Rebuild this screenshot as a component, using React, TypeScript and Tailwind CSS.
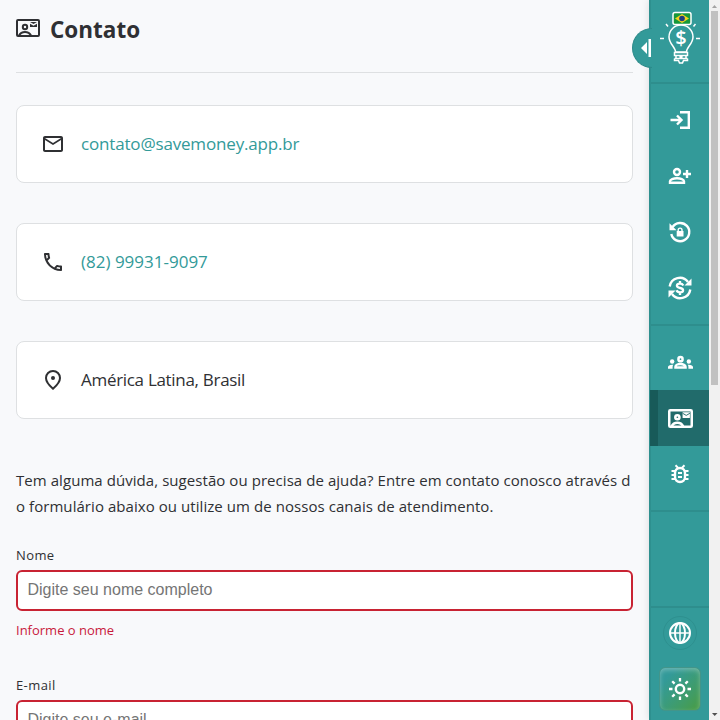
import React from 'react';
import { MdOutlineMail, MdOutlineCall } from 'react-icons/md';

function Glyph({ children, className = 'size-6' }: { children: React.ReactNode; className?: string }) {
  return (
    <svg className={`shrink-0 ${className}`} viewBox="0 0 24 24" fill="none" stroke="currentColor" strokeWidth="2">
      {children}
    </svg>
  );
}

function ContactIcon({ className }: { className?: string }) {
  return (
    <Glyph className={className}>
      <rect x="1" y="4" width="22" height="16" rx="1" />
      <circle cx="9" cy="11" r="2.200" />
      <path d="M3 19.500c2.500-4.700 9.500-4.700 12 0" />
      <path d="M14 6h7v5h-7V7.800l3.500 2L21 7.800V6l-3.500 2L14 6Z" fill="currentColor" stroke="none" />
    </Glyph>
  );
}

function ContactBoldIcon() {
  return (
    <Glyph className="size-[25px]">
      <rect x="1.200" y="4" width="21.600" height="16" rx="1" strokeWidth="2.400" />
      <circle cx="9" cy="10.800" r="2" strokeWidth="2.400" />
      <path d="M3.500 19.500c2-4.700 9-4.700 11 0" strokeWidth="2.400" />
      <path d="M14 6h7v5.500h-7Z" fill="currentColor" stroke="none" />
      <path d="m14 7 3.500 2L21 7" stroke="#216b6b" strokeWidth="0.900" />
    </Glyph>
  );
}

function PinIcon() {
  return (
    <Glyph>
      <path d="M12 20.700c-4.700-4-7-7.500-7-10.700a7 7 0 0 1 14 0c0 3.200-2.300 6.700-7 10.700Z" />
      <circle cx="12" cy="10" r="2" fill="currentColor" stroke="none" />
    </Glyph>
  );
}

function LoginIcon() {
  return (
    <Glyph>
      <path d="M12 4.200h8.800v15.600H12M2.500 12h11M9 7.500l4.500 4.500L9 16.500" strokeWidth="2.400" />
    </Glyph>
  );
}

function PersonAddIcon() {
  return (
    <Glyph>
      <circle cx="9" cy="8" r="3" strokeWidth="2.400" />
      <path d="M2 18.800v-1.600c0-1.800 3.500-3 7-3s7 1.200 7 3v1.600ZM19 6v8M15 10h8" strokeWidth="2.400" />
    </Glyph>
  );
}

function GroupsIcon() {
  return (
    <Glyph className="size-[25px]">
      <circle cx="12" cy="8.800" r="2" strokeWidth="2.400" />
      <path d="M7.200 16.800v-.8c0-1.400 2.200-2.500 4.800-2.500s4.800 1.100 4.800 2.500v.8Z" strokeWidth="2.400" />
      <circle cx="4" cy="11" r="2.100" fill="currentColor" stroke="none" />
      <circle cx="20" cy="11" r="2.100" fill="currentColor" stroke="none" />
      <path d="M0 18v-1.600c0-1.500 2-2.600 5.100-2.300-.5.700-.7 1.300-.7 2.100V18ZM24 18v-1.600c0-1.500-2-2.600-5.100-2.300.5.700.7 1.300.7 2.100V18Z" fill="currentColor" stroke="none" />
    </Glyph>
  );
}

function LockResetIcon() {
  return (
    <Glyph>
      <path d="M4.500 7.200A9.100 9.100 0 1 1 3.300 14" strokeWidth="2.400" />
      <path d="M1.500 3.300v7h7Z" fill="currentColor" stroke="none" />
      <path d="M8.700 11h6.800v5.500H8.700Z" fill="currentColor" stroke="none" />
      <path d="M10.200 11.500V10a1.900 1.900 0 0 1 3.800 0v1.500" strokeWidth="1.400" />
    </Glyph>
  );
}

function CurrencyIcon() {
  return (
    <Glyph>
      <path d="M1.700 10.500A10.200 10.200 0 0 1 20 6M22.300 13.500A10.200 10.200 0 0 1 4 18" strokeWidth="2.400" />
      <path d="M23.500 2.500v7h-7ZM.5 21.500v-7h7Z" fill="currentColor" stroke="none" />
      <path d="M15.300 9.500c-.7-1.300-1.800-1.800-3.300-1.800-4 0-4.200 3.600 0 4.300s4 4.400 0 4.400c-1.700 0-2.900-.7-3.500-2.100M12 5v2.500M12 16.500V19" strokeWidth="2.300" />
    </Glyph>
  );
}

function BugIcon() {
  return (
    <Glyph>
      <rect x="7" y="6" width="10" height="14" rx="5" strokeWidth="2.400" />
      <path d="m7.500 3.300 2.700 2.700M16.500 3.300 13.800 6M3.500 9H7M3.500 13H7M3.500 17H7M17 9h3.500M17 13h3.500M17 17h3.500M10 11h4M10 15h4" />
    </Glyph>
  );
}

function SunIcon() {
  return (
    <Glyph>
      <circle cx="12" cy="12" r="4.200" strokeWidth="2.400" />
      <path d="M12 1v3.500M12 19.500V23M1 12h3.500M19.500 12H23M4.200 4.200l2.400 2.400M17.400 17.400l2.400 2.400M4.200 19.800l2.400-2.400M17.400 6.600l2.400-2.400" strokeWidth="2.300" />
    </Glyph>
  );
}

function Card({ icon, children }: { icon: React.ReactNode; children: React.ReactNode }) {
  return (
    <div className="flex h-[78px] items-center gap-4 rounded-lg border border-[#dee0e2] bg-white pl-6 text-[#2f3033]">
      {icon}
      <span className="whitespace-nowrap text-[17px] leading-7">{children}</span>
    </div>
  );
}

function Field({ label, placeholder, error }: { label: string; placeholder: string; error: string }) {
  return (
    <div className="h-[130px]">
      <label className="block h-[25px] text-[13px] leading-5 tracking-[0.4px]">{label}</label>
      <input
        className="block h-[41px] w-full rounded-md border-2 border-[#c82333] bg-white pb-0.5 pl-[9.5px] pr-2.5 font-['Liberation_Sans',sans-serif] text-base placeholder:text-[#757575]"
        placeholder={placeholder}
      />
      <p className="mt-[9px] text-[13px] leading-5 text-[#c8193c]">{error}</p>
    </div>
  );
}

function NavItem({ children }: { children: React.ReactNode }) {
  return <div className="flex h-14 items-center justify-center">{children}</div>;
}

function Logo() {
  return (
    <svg width="44" height="58" viewBox="658 10 44 58" fill="none" stroke="#fff" strokeWidth="1.500">
      <path d="M675.500 52c0-5-6.500-8-6.500-15a12 12 0 0 1 24 0c0 7-6.500 10-6.500 15Z" />
      <path d="M674.500 52.500h13v3h-13zM674.500 58.500h13M676 55.500v3M686 55.500v3M679 55.500l4 3M683 55.500l-4 3M674.500 58.500v2h4l1 2.500h3l1-2.500h4v-2M660 38.500h4M696 38.500h4M666 24l2 2.500M695.500 24l-2 2.500" />
      <rect x="673" y="12.500" width="18" height="12" rx="2" fill="#17983b" />
      <path d="m682 14 7 4.500-7 4.500-7-4.500Z" fill="#f5d31c" stroke="none" />
      <circle cx="682" cy="18.500" r="2.800" fill="#203d7e" stroke="none" />
      <text x="681" y="45" textAnchor="middle" fill="#fff" stroke="none" className="font-['Open_Sans',sans-serif] text-xl font-semibold">$</text>
    </svg>
  );
}

export default function App() {
  return (
    <div className="relative flex h-[720px] w-[720px] overflow-hidden bg-[#f8f9fb] font-['Open_Sans','Noto_Sans',sans-serif] text-[#2f3033]">
      <main className="w-[649px] shrink-0 px-4">
        <header className="flex h-[73px] items-start gap-2.5 border-b border-[#dee0e2] pt-[15px]">
          <ContactIcon className="mt-px size-6" />
          <h1 className="text-[22.5px] font-bold leading-[29px]">Contato</h1>
        </header>
        <div className="mt-8 flex flex-col gap-10">
          <Card icon={<MdOutlineMail className="size-6" />}><span className="tracking-[-0.17px] text-[#339a99]">contato@savemoney.app.br</span></Card>
          <Card icon={<MdOutlineCall className="size-6" />}><span className="text-[#339a99]">(82) 99931-9097</span></Card>
          <Card icon={<PinIcon />}><span className="tracking-[-0.3px]">América Latina, Brasil</span></Card>
        </div>
        <div className="mt-12 h-[78px] whitespace-nowrap text-[15px] leading-[26px] tracking-[0.06px]">
          <p>Tem alguma dúvida, sugestão ou precisa de ajuda? Entre em contato conosco através d</p>
          <p>o formulário abaixo ou utilize um de nossos canais de atendimento.</p>
        </div>
        <Field label="Nome" placeholder="Digite seu nome completo" error="Informe o nome" />
        <Field label="E-mail" placeholder="Digite seu e-mail" error="Informe o e-mail" />
      </main>
      <div className="absolute left-[632px] top-7 flex h-10 w-5 items-center rounded-l-full border border-r-0 border-[#2c8b8a] bg-[#339a99]" />
      <aside className="flex w-[60px] shrink-0 flex-col border-l-2 border-[#2e908f] bg-[#339a99] text-white shadow-[0_0_8px_rgba(0,0,0,0.12)]">
        <div className="flex h-[84px] justify-center border-b-2 border-[#2e8e8d] pt-2.5"><Logo /></div>
        <nav className="h-[242px] border-b-2 border-[#2e8e8d] pt-2">
          <NavItem><LoginIcon /></NavItem>
          <NavItem><PersonAddIcon /></NavItem>
          <NavItem><LockResetIcon /></NavItem>
          <NavItem><CurrencyIcon /></NavItem>
        </nav>
        <nav className="h-[186px] border-b-2 border-[#2e8e8d] pt-2">
          <NavItem><GroupsIcon /></NavItem>
          <div className="-ml-px flex h-14 items-center justify-center border-l-8 border-[#185a59] bg-[#216b6b] pr-[7px]"><ContactBoldIcon /></div>
          <NavItem><BugIcon /></NavItem>
        </nav>
        <div className="h-24 border-b-2 border-[#2e8e8d]" />
        <div className="flex flex-col items-center pt-2">
          <div className="flex size-[34px] items-center justify-center rounded-full border border-[#2e908f]">
            <svg className="size-6" viewBox="0 0 24 24" fill="none" stroke="currentColor" strokeWidth="2">
              <circle cx="12" cy="12" r="10" /><ellipse cx="12" cy="12" rx="5" ry="10" /><path d="M12 2v20M2 12h20" strokeWidth="1.500" />
            </svg>
          </div>
          <div className="mt-[17px] flex h-11 w-[42px] items-center justify-center rounded-md border border-[#43958a] bg-linear-to-br from-[#339a99] from-20% to-[#469c4e] to-90% shadow-[inset_0_2px_5px_rgba(255,255,255,0.3)]"><SunIcon /></div>
        </div>
      </aside>
      <svg className="absolute left-[640px] top-[38px]" width="14" height="20" fill="#fff"><path d="M7 4v12L1 10ZM8.500 1H11v18H8.500Z" /></svg>
      <div className="flex w-[11px] flex-col items-center bg-[#f1f1f1]">
        <svg width="7" height="11" fill="#a3a3a3"><path d="M1 8l2.500-3L6 8Z" /></svg>
        <div className="h-[374px] w-[7px] bg-[#c1c1c1]" />
        <svg className="mt-auto" width="7" height="9" fill="#505050"><path d="M1 2h5.500L3.700 5Z" /></svg>
      </div>
    </div>
  );
}
